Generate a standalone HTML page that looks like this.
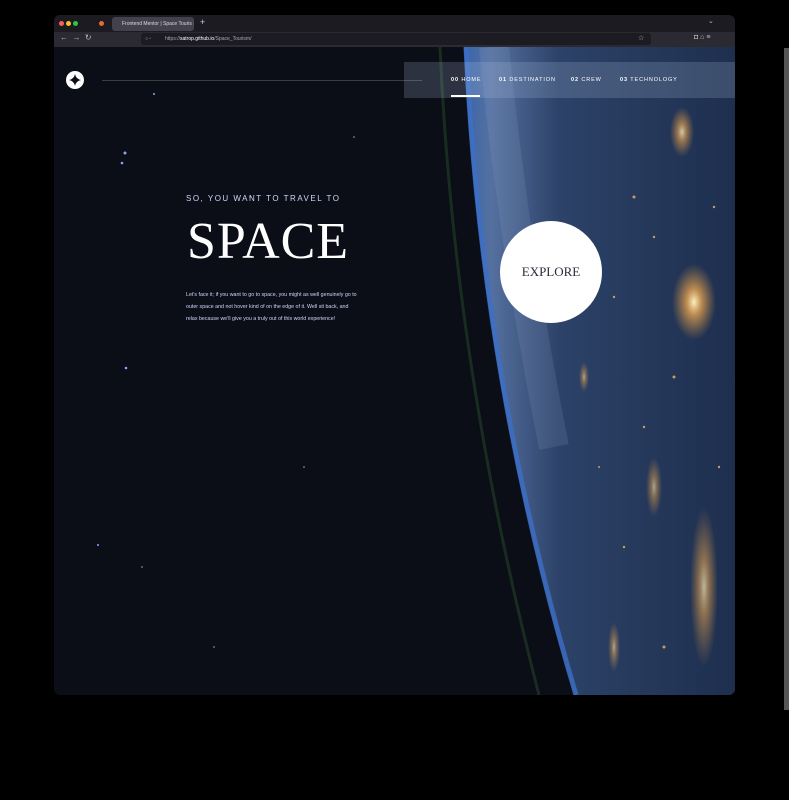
<!DOCTYPE html>
<html><head><meta charset="utf-8"><style>
*{margin:0;padding:0;box-sizing:border-box}
body{width:789px;height:800px;background:#000;position:relative;overflow:hidden;font-family:"Liberation Sans",sans-serif}
.shadow{position:absolute;left:784px;top:48px;width:5px;height:662px;background:#555}
.win{position:absolute;left:54px;top:15px;width:681px;height:680px;border-radius:6px;overflow:hidden;background:#0b0d17}
.tabs{position:absolute;left:0;top:0;width:681px;height:17px;background:#1c1b22}
.tab{position:absolute;left:58px;top:2px;width:82px;height:14px;background:#42414d;border-radius:3px;color:#ddd;font-size:5px;line-height:14px;padding-left:10px;white-space:nowrap;overflow:hidden}
.dot{position:absolute;top:6px;width:5px;height:5px;border-radius:50%}
.tool{position:absolute;left:0;top:17px;width:681px;height:15px;background:#2b2a33}
.url{position:absolute;left:87px;top:1px;width:510px;height:12px;background:#1c1b22;border-radius:3px;color:#aaa;font-size:5px;line-height:12px;padding-left:24px;white-space:nowrap}
.page{position:absolute;left:0;top:32px;width:681px;height:648px}
.nav{position:absolute;left:350px;top:15px;width:331px;height:36px;background:rgba(180,200,230,0.2)}
.nav span{position:absolute;top:15px;color:#fff;font-size:5.5px;letter-spacing:0.9px;white-space:nowrap}
.line{position:absolute;left:48px;top:33px;width:320px;height:1px;background:#3a3c48}
.logo{position:absolute;left:12px;top:24px;width:18px;height:18px;border-radius:50%;background:#fff}
.sub{position:absolute;left:132px;top:147px;color:#d0d6f9;font-size:8px;letter-spacing:1.5px}
.big{position:absolute;left:133px;top:163px;color:#fff;font-family:"Liberation Serif",serif;font-size:52px;letter-spacing:1px;line-height:64px}
.p{position:absolute;left:132px;top:242px;width:172px;color:#d0d6f9;font-size:5.3px;line-height:12px}
.exp{position:absolute;left:446px;top:174px;width:102px;height:102px;border-radius:50%;background:#fff;color:#2a2c38;font-family:"Liberation Serif",serif;font-size:13px;text-align:center;line-height:102px}
</style></head><body>
<div class="shadow"></div>
<div class="win">
 <div class="tabs">
  <div class="dot" style="left:5px;background:#ff5f57"></div>
  <div class="dot" style="left:12px;background:#febc2e"></div>
  <div class="dot" style="left:19px;background:#28c840"></div>
  <div class="dot" style="left:45px;background:#e66b2c"></div>
  <div class="tab">Frontend Mentor | Space Touris ×</div>
  <div style="position:absolute;left:146px;top:2px;color:#ccc;font-size:9px">+</div>
  <div style="position:absolute;left:654px;top:2px;color:#bbb;font-size:7px">⌄</div>
 </div>
 <div class="tool">
  <div style="position:absolute;left:6px;top:1px;color:#bbb;font-size:8px">←&nbsp; → &nbsp;↻</div>
  <div class="url"><span style="position:absolute;left:4px;color:#bbb">○ ▫</span>https://<span style="color:#fff">satrop.github.io</span>/Space_Tourism/</div>
  <div style="position:absolute;left:584px;top:2px;color:#bbb;font-size:7px">☆</div>
  <div style="position:absolute;left:640px;top:2px;color:#bbb;font-size:7px">◘ ⌂ ≡</div>
 </div>
 <div class="page">
  <svg width="681" height="648" style="position:absolute;left:0;top:0">
   <defs>
    <linearGradient id="e" x1="0" y1="0" x2="1" y2="0">
     <stop offset="0" stop-color="#3a66aa"/><stop offset="0.1" stop-color="#5570a0"/><stop offset="0.35" stop-color="#2c4268"/><stop offset="1" stop-color="#1e2f4e"/>
    </linearGradient>
    <radialGradient id="g1"><stop offset="0" stop-color="#fff0c0"/><stop offset="0.35" stop-color="#e0a050" stop-opacity=".8"/><stop offset="1" stop-color="#c98a3c" stop-opacity="0"/></radialGradient>
   </defs>
   <path d="M386,0 Q400,320 485,648" stroke="#1c3422" stroke-width="3" fill="none" opacity=".8"/>
   <path d="M410,0 Q425,330 520,648 L681,648 L681,0 Z" fill="url(#e)"/>
   <path d="M412,0 Q427,330 522,648" stroke="#3c6fc8" stroke-width="5" fill="none" opacity=".8"/>
   <path d="M440,0 Q460,200 500,400" stroke="#9ab0d0" stroke-width="30" fill="none" opacity=".15"/>
   <ellipse cx="640" cy="255" rx="22" ry="38" fill="url(#g1)"/>
   <ellipse cx="628" cy="85" rx="12" ry="25" fill="url(#g1)" opacity=".8"/>
   <ellipse cx="650" cy="540" rx="14" ry="80" fill="url(#g1)" opacity=".7"/>
   <ellipse cx="600" cy="440" rx="8" ry="30" fill="url(#g1)" opacity=".6"/>
   <ellipse cx="560" cy="600" rx="6" ry="25" fill="url(#g1)" opacity=".6"/>
   <ellipse cx="530" cy="330" rx="5" ry="15" fill="url(#g1)" opacity=".6"/>
   <g fill="#f0b860" opacity=".8"><circle cx="580" cy="150" r="1.5"/><circle cx="600" cy="190" r="1.2"/><circle cx="560" cy="250" r="1.2"/><circle cx="620" cy="330" r="1.5"/><circle cx="590" cy="380" r="1.2"/><circle cx="570" cy="500" r="1.2"/><circle cx="610" cy="600" r="1.5"/><circle cx="665" cy="420" r="1.2"/><circle cx="545" cy="420" r="1"/><circle cx="660" cy="160" r="1.2"/></g>
   <g fill="#8aa2ff"><circle cx="71" cy="106" r="1.5"/><circle cx="68" cy="116" r="1.3"/><circle cx="72" cy="321" r="1.3"/><circle cx="100" cy="47" r="1"/><circle cx="44" cy="498" r="1"/><circle cx="196" cy="150" r="0.8"/><circle cx="300" cy="90" r="0.8"/><circle cx="88" cy="520" r="0.8"/><circle cx="250" cy="420" r="0.8"/><circle cx="160" cy="600" r="0.8"/></g>
  </svg>
  <div class="line"></div>
  <div class="logo"><svg width="18" height="18"><path d="M9 3 Q10 8 15 9 Q10 10 9 15 Q8 10 3 9 Q8 8 9 3Z" fill="#0b0d17"/></svg></div>
  <div class="nav">
   <span style="left:47px"><b>00</b> HOME</span>
   <span style="left:95px"><b>01</b> DESTINATION</span>
   <span style="left:167px"><b>02</b> CREW</span>
   <span style="left:216px"><b>03</b> TECHNOLOGY</span>
   <div style="position:absolute;left:47px;top:33px;width:29px;height:2px;background:#fff"></div>
  </div>
  <div class="sub">SO, YOU WANT TO TRAVEL TO</div>
  <div class="big">SPACE</div>
  <div class="p">Let's face it; if you want to go to space, you might as well genuinely go to outer space and not hover kind of on the edge of it. Well sit back, and relax because we'll give you a truly out of this world experience!</div>
  <div class="exp">EXPLORE</div>
 </div>
</div>
</body></html>
